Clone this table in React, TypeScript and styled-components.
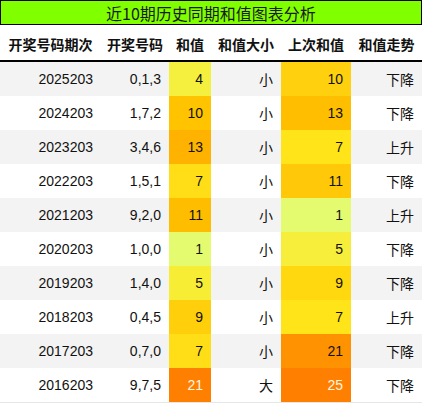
import React from "react";
import styled, { createGlobalStyle } from "styled-components";

const Global = createGlobalStyle`
  html, body { margin: 0; padding: 0; background: #ffffff; }
  body { font-family: "Liberation Sans", "Noto Sans CJK SC", sans-serif; }
`;

const Wrap = styled.div`
  width: 422px;
  box-sizing: border-box;
`;

const Title = styled.div`
  height: 25px;
  box-sizing: border-box;
  border: 1px solid #000;
  background: #80ff00;
  display: flex;
  align-items: center;
  justify-content: center;
  font-family: "Noto Sans CJK SC", sans-serif;
  font-size: 16px;
  color: #1a1a1a;
  line-height: 1;
`;

const COLS = "101px 68px 42px 70px 70px 71px";

const HeadRow = styled.div`
  display: grid;
  grid-template-columns: ${COLS};
  height: 37px;
  box-sizing: border-box;
  border-bottom: 2px solid #000;
`;

const HeadCell = styled.div`
  display: flex;
  align-items: center;
  justify-content: center;
  padding-top: 3px;
  font-family: "Noto Sans CJK SC", sans-serif;
  font-weight: 700;
  font-size: 14px;
  color: #111;
  white-space: nowrap;
`;

const Body = styled.div`
  border-bottom: 1px solid #e6e6e6;
`;

const Row = styled.div<{ $alt: boolean }>`
  display: grid;
  grid-template-columns: ${COLS};
  height: 34px;
  background: ${(p) => (p.$alt ? "#f3f3f3" : "#ffffff")};
`;

const Cell = styled.div<{ $bg?: string; $light?: boolean; $cjk?: boolean }>`
  display: flex;
  align-items: center;
  justify-content: flex-end;
  padding-right: 8px;
  font-size: 14px;
  font-family: ${(p) =>
    p.$cjk ? `"Noto Sans CJK SC", sans-serif` : `"Liberation Sans", sans-serif`};
  color: ${(p) => (p.$light ? "#fff6e6" : "#111")};
  background: ${(p) => p.$bg ?? "transparent"};
`;

type RowData = {
  period: string;
  nums: string;
  sum: number;
  sumBg: string;
  size: string;
  prev: number;
  prevBg: string;
  trend: string;
};

const rows: RowData[] = [
  { period: "2025203", nums: "0,1,3", sum: 4, sumBg: "#f5ef3e", size: "小", prev: 10, prevBg: "#ffd00e", trend: "下降" },
  { period: "2024203", nums: "1,7,2", sum: 10, sumBg: "#ffc300", size: "小", prev: 13, prevBg: "#ffbf00", trend: "下降" },
  { period: "2023203", nums: "3,4,6", sum: 13, sumBg: "#ffb300", size: "小", prev: 7, prevBg: "#ffe41a", trend: "上升" },
  { period: "2022203", nums: "1,5,1", sum: 7, sumBg: "#ffde17", size: "小", prev: 11, prevBg: "#ffc808", trend: "下降" },
  { period: "2021203", nums: "9,2,0", sum: 11, sumBg: "#ffbd00", size: "小", prev: 1, prevBg: "#e4fb70", trend: "上升" },
  { period: "2020203", nums: "1,0,0", sum: 1, sumBg: "#e4fb70", size: "小", prev: 5, prevBg: "#f6ee3a", trend: "下降" },
  { period: "2019203", nums: "1,4,0", sum: 5, sumBg: "#f8ed35", size: "小", prev: 9, prevBg: "#ffd810", trend: "下降" },
  { period: "2018203", nums: "0,4,5", sum: 9, sumBg: "#ffcf0c", size: "小", prev: 7, prevBg: "#ffe41a", trend: "上升" },
  { period: "2017203", nums: "0,7,0", sum: 7, sumBg: "#ffde17", size: "小", prev: 21, prevBg: "#ff9200", trend: "下降" },
  { period: "2016203", nums: "9,7,5", sum: 21, sumBg: "#ff8000", size: "大", prev: 25, prevBg: "#ff8000", trend: "下降" },
];

const headers = ["开奖号码期次", "开奖号码", "和值", "和值大小", "上次和值", "和值走势"];

export default function App() {
  return (
    <Wrap>
      <Global />
      <Title>近10期历史同期和值图表分析</Title>
      <HeadRow>
        {headers.map((h) => (
          <HeadCell key={h}>{h}</HeadCell>
        ))}
      </HeadRow>
      <Body>
        {rows.map((r, i) => (
          <Row key={r.period} $alt={i % 2 === 0}>
            <Cell>{r.period}</Cell>
            <Cell>{r.nums}</Cell>
            <Cell $bg={r.sumBg} $light={r.sum >= 21}>{r.sum}</Cell>
            <Cell $cjk>{r.size}</Cell>
            <Cell $bg={r.prevBg} $light={r.prev >= 25}>{r.prev}</Cell>
            <Cell $cjk>{r.trend}</Cell>
          </Row>
        ))}
      </Body>
    </Wrap>
  );
}
